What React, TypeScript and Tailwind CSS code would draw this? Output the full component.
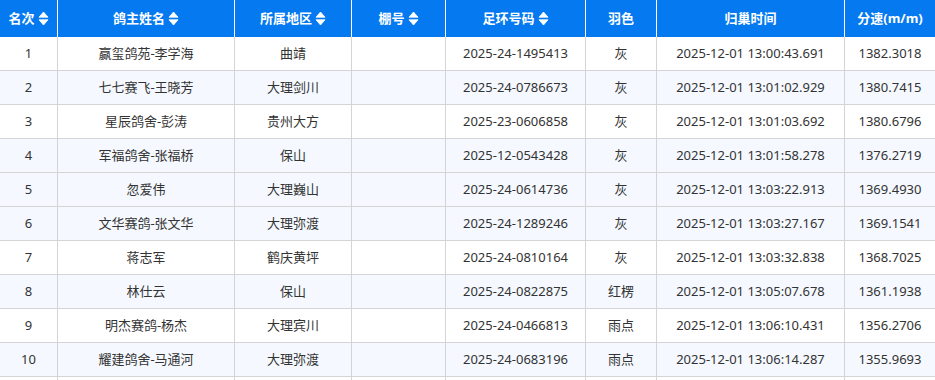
import React from "react";

type Row = {
  rank: number;
  name: string;
  area: string;
  loft: string;
  ring: string;
  color: string;
  time: string;
  speed: string;
};

const rows: Row[] = [
  { rank: 1, name: "赢玺鸽苑-李学海", area: "曲靖", loft: "", ring: "2025-24-1495413", color: "灰", time: "2025-12-01 13:00:43.691", speed: "1382.3018" },
  { rank: 2, name: "七七赛飞-王晓芳", area: "大理剑川", loft: "", ring: "2025-24-0786673", color: "灰", time: "2025-12-01 13:01:02.929", speed: "1380.7415" },
  { rank: 3, name: "星辰鸽舍-彭涛", area: "贵州大方", loft: "", ring: "2025-23-0606858", color: "灰", time: "2025-12-01 13:01:03.692", speed: "1380.6796" },
  { rank: 4, name: "军福鸽舍-张福桥", area: "保山", loft: "", ring: "2025-12-0543428", color: "灰", time: "2025-12-01 13:01:58.278", speed: "1376.2719" },
  { rank: 5, name: "忽爱伟", area: "大理巍山", loft: "", ring: "2025-24-0614736", color: "灰", time: "2025-12-01 13:03:22.913", speed: "1369.4930" },
  { rank: 6, name: "文华赛鸽-张文华", area: "大理弥渡", loft: "", ring: "2025-24-1289246", color: "灰", time: "2025-12-01 13:03:27.167", speed: "1369.1541" },
  { rank: 7, name: "蒋志军", area: "鹤庆黄坪", loft: "", ring: "2025-24-0810164", color: "灰", time: "2025-12-01 13:03:32.838", speed: "1368.7025" },
  { rank: 8, name: "林仕云", area: "保山", loft: "", ring: "2025-24-0822875", color: "红楞", time: "2025-12-01 13:05:07.678", speed: "1361.1938" },
  { rank: 9, name: "明杰赛鸽-杨杰", area: "大理宾川", loft: "", ring: "2025-24-0466813", color: "雨点", time: "2025-12-01 13:06:10.431", speed: "1356.2706" },
  { rank: 10, name: "耀建鸽舍-马通河", area: "大理弥渡", loft: "", ring: "2025-24-0683196", color: "雨点", time: "2025-12-01 13:06:14.287", speed: "1355.9693" },
  { rank: 11, name: "", area: "", loft: "", ring: "", color: "", time: "", speed: "" },
];

// rows that show the pale background (5 is the hovered one)
const shaded = new Set([2, 4, 5, 6, 8, 10]);

const SortIcon = () => (
  <svg width="11" height="15" viewBox="0 0 11 15" className="shrink-0">
    <path d="M1 6.2 L5.5 1 L10 6.2 Z" fill="white" stroke="white" strokeWidth="0.8" strokeLinejoin="round" />
    <path d="M1 8.8 L5.5 14 L10 8.8 Z" fill="white" stroke="white" strokeWidth="0.8" strokeLinejoin="round" />
  </svg>
);

const headers: { label: string; sort: boolean }[] = [
  { label: "名次", sort: true },
  { label: "鸽主姓名", sort: true },
  { label: "所属地区", sort: true },
  { label: "棚号", sort: true },
  { label: "足环号码", sort: true },
  { label: "羽色", sort: false },
  { label: "归巢时间", sort: false },
  { label: "分速(m/m)", sort: false },
];

const grid = "grid grid-cols-[58px_177px_117px_94px_140px_71px_188px_90px]";

export default function App() {
  return (
    <div
      className="w-[935px] h-[380px] overflow-hidden bg-white text-[13px] text-[#333]"
      style={{ fontFamily: '"Noto Sans", "Noto Sans CJK SC", sans-serif' }}
    >
      <div className={`${grid} h-[37px] bg-[#0479f0] text-white font-bold`}>
        {headers.map((h, i) => (
          <div
            key={h.label}
            className={`flex items-center justify-center gap-[3px] ${i < headers.length - 1 ? "border-r border-white" : ""}`}
          >
            <span>{h.label}</span>
            {h.sort && <SortIcon />}
          </div>
        ))}
      </div>

      {rows.map((r) => {
        const cells = [String(r.rank), r.name, r.area, r.loft, r.ring, r.color, r.time, r.speed];
        return (
          <div
            key={r.rank}
            className={`${grid} h-[34px] ${shaded.has(r.rank) ? "bg-[#f5f9ff]" : "bg-white"}`}
          >
            {cells.map((c, i) => (
              <div
                key={i}
                className={`flex items-center justify-center border-b border-[#d4d4d4] ${i < cells.length - 1 ? "border-r" : ""}`}
              >
                {r.rank === 11 ? "" : c}
              </div>
            ))}
          </div>
        );
      })}
    </div>
  );
}
